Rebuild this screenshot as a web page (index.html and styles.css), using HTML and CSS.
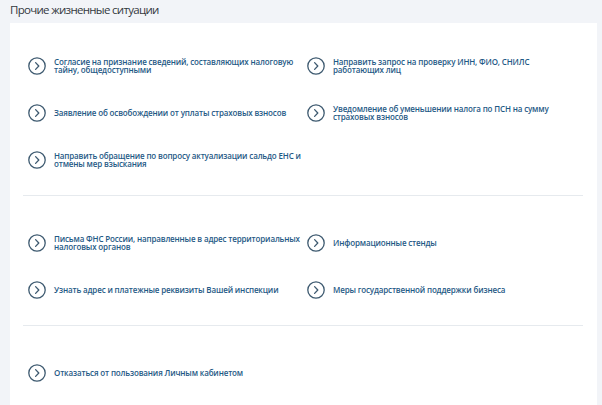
FILE: index.html
```html
<!DOCTYPE html>
<html lang="ru">
<head>
<meta charset="utf-8">
<link rel="stylesheet" href="styles.css">
</head>
<body>
<h1 class="title">Прочие жизненные ситуации</h1>
<div class="card">
  <div class="section first">
    <a class="item"><span class="ico"><svg viewBox="0 0 18 18"><circle cx="9" cy="9" r="8.2"/><path d="M7.6 5.6 L10.8 9 L7.6 12.4"/></svg></span><span class="txt">Согласие на признание сведений, составляющих налоговую тайну, общедоступными</span></a>
    <a class="item"><span class="ico"><svg viewBox="0 0 18 18"><circle cx="9" cy="9" r="8.2"/><path d="M7.6 5.6 L10.8 9 L7.6 12.4"/></svg></span><span class="txt">Направить запрос на проверку ИНН, ФИО, СНИЛС работающих лиц</span></a>
    <a class="item"><span class="ico"><svg viewBox="0 0 18 18"><circle cx="9" cy="9" r="8.2"/><path d="M7.6 5.6 L10.8 9 L7.6 12.4"/></svg></span><span class="txt">Заявление об освобождении от уплаты страховых взносов</span></a>
    <a class="item"><span class="ico"><svg viewBox="0 0 18 18"><circle cx="9" cy="9" r="8.2"/><path d="M7.6 5.6 L10.8 9 L7.6 12.4"/></svg></span><span class="txt">Уведомление об уменьшении налога по ПСН на сумму страховых взносов</span></a>
    <a class="item"><span class="ico"><svg viewBox="0 0 18 18"><circle cx="9" cy="9" r="8.2"/><path d="M7.6 5.6 L10.8 9 L7.6 12.4"/></svg></span><span class="txt">Направить обращение по вопросу актуализации сальдо ЕНС и отмены мер взыскания</span></a>
  </div>
  <div class="section">
    <a class="item"><span class="ico"><svg viewBox="0 0 18 18"><circle cx="9" cy="9" r="8.2"/><path d="M7.6 5.6 L10.8 9 L7.6 12.4"/></svg></span><span class="txt">Письма ФНС России, направленные в адрес территориальных налоговых органов</span></a>
    <a class="item"><span class="ico"><svg viewBox="0 0 18 18"><circle cx="9" cy="9" r="8.2"/><path d="M7.6 5.6 L10.8 9 L7.6 12.4"/></svg></span><span class="txt">Информационные стенды</span></a>
    <a class="item"><span class="ico"><svg viewBox="0 0 18 18"><circle cx="9" cy="9" r="8.2"/><path d="M7.6 5.6 L10.8 9 L7.6 12.4"/></svg></span><span class="txt">Узнать адрес и платежные реквизиты Вашей инспекции</span></a>
    <a class="item"><span class="ico"><svg viewBox="0 0 18 18"><circle cx="9" cy="9" r="8.2"/><path d="M7.6 5.6 L10.8 9 L7.6 12.4"/></svg></span><span class="txt">Меры государственной поддержки бизнеса</span></a>
  </div>
  <div class="section last">
    <a class="item"><span class="ico"><svg viewBox="0 0 18 18"><circle cx="9" cy="9" r="8.2"/><path d="M7.6 5.6 L10.8 9 L7.6 12.4"/></svg></span><span class="txt">Отказаться от пользования Личным кабинетом</span></a>
  </div>
</div>
</body>
</html>
```
FILE: styles.css
```css
html, body {
  margin: 0;
  padding: 0;
  background: #f2f4f8;
  font-family: "Open Sans", "Noto Sans", sans-serif;
  height: 405px;
  overflow: hidden;
}
.title {
  margin: 0;
  padding: 2px 0 0 10px;
  height: 21px;
  font-size: 11.5px;
  line-height: 16px;
  font-weight: 400;
  color: #33383e;
  letter-spacing: -0.7px;
}
.card {
  margin-left: 10px;
  width: 573px;
  padding: 0 14px 0 0;
  background: #fff;
  height: 382px;
}
.section {
  margin-left: 13px;
  padding: 32px 0 20px 5px;
  border-bottom: 1px solid #e6eaee;
  display: grid;
  grid-template-columns: 279px 270px;
  row-gap: 17px;
}
.section.first {
  padding-top: 28px;
}
.section.last {
  border-bottom: none;
}
.item {
  display: flex;
  align-items: center;
  gap: 8px;
  height: 30px;
  color: #1f5a86;
  text-decoration: none;
}
.ico {
  flex: none;
  width: 18px;
  height: 18px;
}
.ico svg {
  display: block;
  width: 18px;
  height: 18px;
  fill: none;
  stroke: #3e5a70;
  stroke-width: 1.3;
  stroke-linecap: round;
  stroke-linejoin: round;
}
.txt {
  font-size: 8px;
  line-height: 8px;
  font-weight: 600;
  letter-spacing: -0.15px;
}
```
